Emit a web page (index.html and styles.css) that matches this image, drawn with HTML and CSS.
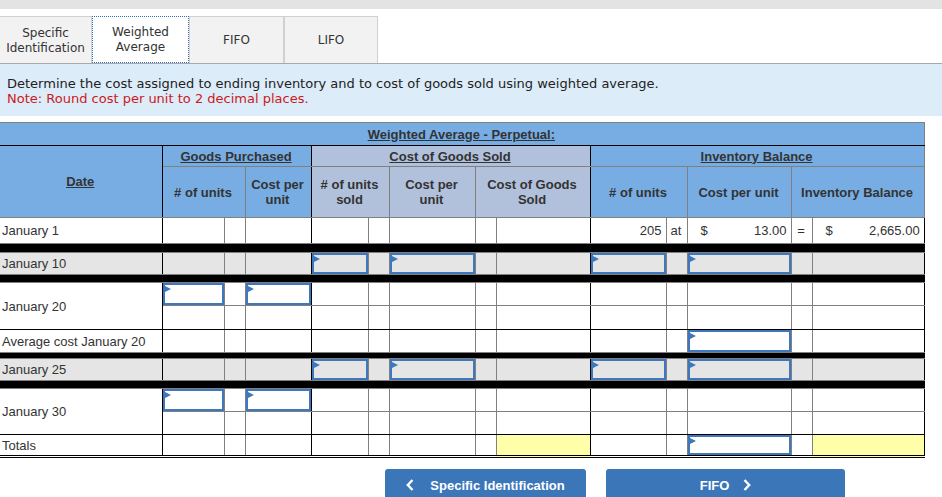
FILE: index.html
```html
<!DOCTYPE html>
<html>
<head>
<meta charset="utf-8">
<link rel="stylesheet" href="styles.css">
</head>
<body>
<div class="topbar"></div>
<div class="tabs">
  <div class="tab t1">Specific<br>Identification</div>
  <div class="tab t2 active">Weighted<br>Average</div>
  <div class="tab t3">FIFO</div>
  <div class="tab t4">LIFO</div>
</div>
<div class="instr">
  <p>Determine the cost assigned to ending inventory and to cost of goods sold using weighted average.</p>
  <p class="note">Note: Round cost per unit to 2 decimal places.</p>
</div>
<table class="grid">
  <colgroup>
    <col style="width:162px"><col style="width:62px"><col style="width:21px"><col style="width:66px">
    <col style="width:57px"><col style="width:21px"><col style="width:86px"><col style="width:21px"><col style="width:94px">
    <col style="width:76px"><col style="width:21px"><col style="width:104px"><col style="width:21px"><col style="width:112px">
  </colgroup>
  <thead>
    <tr class="h1"><th colspan="14" class="title"><u>Weighted Average - Perpetual:</u></th></tr>
    <tr class="h2">
      <th rowspan="2" class="k date"><u>Date</u></th>
      <th colspan="3" class="k"><u>Goods Purchased</u></th>
      <th colspan="5" class="k cogs"><u>Cost of Goods Sold</u></th>
      <th colspan="5" class="edge"><u>Inventory Balance</u></th>
    </tr>
    <tr class="h3">
      <th colspan="2"># of units</th>
      <th class="k">Cost per<br>unit</th>
      <th colspan="2" class="cogs"># of units<br>sold</th>
      <th class="cogs">Cost per<br>unit</th>
      <th colspan="2" class="cogs k">Cost of Goods<br>Sold</th>
      <th colspan="2"># of units</th>
      <th>Cost per unit</th>
      <th colspan="2" class="edge">Inventory Balance</th>
    </tr>
  </thead>
  <tbody>
    <tr class="r26">
      <td class="lbl k">January 1</td>
      <td></td><td></td><td class="k"></td>
      <td></td><td></td><td></td><td></td><td class="k"></td>
      <td class="num">205</td><td class="ctr">at</td>
      <td><div class="amt"><span>$</span><span>13.00</span></div></td>
      <td class="ctr">=</td>
      <td class="k"><div class="amt"><span>$</span><span>2,665.00</span></div></td>
    </tr>
    <tr class="sep s9"><td colspan="14"></td></tr>
    <tr class="r22 gray">
      <td class="lbl k">January 10</td>
      <td></td><td></td><td class="k"></td>
      <td class="in"><div class="inp"></div></td><td></td><td class="in"><div class="inp"></div></td><td></td><td class="k"></td>
      <td class="in"><div class="inp"></div></td><td></td><td class="in"><div class="inp"></div></td><td></td><td class="k"></td>
    </tr>
    <tr class="sep s8"><td colspan="14"></td></tr>
    <tr class="r23">
      <td class="lbl k kb" rowspan="2">January 20</td>
      <td class="in"><div class="inp"></div></td><td></td><td class="in k"><div class="inp"></div></td>
      <td></td><td></td><td></td><td></td><td class="k"></td>
      <td></td><td></td><td></td><td></td><td class="k"></td>
    </tr>
    <tr class="r24 kb">
      <td></td><td></td><td class="k"></td>
      <td></td><td></td><td></td><td></td><td class="k"></td>
      <td></td><td></td><td></td><td></td><td class="k"></td>
    </tr>
    <tr class="r23">
      <td class="lbl k">Average cost January 20</td>
      <td></td><td></td><td class="k"></td>
      <td></td><td></td><td></td><td></td><td class="k"></td>
      <td></td><td></td><td class="in"><div class="inp"></div></td><td></td><td class="k"></td>
    </tr>
    <tr class="sep s6"><td colspan="14"></td></tr>
    <tr class="r22 gray">
      <td class="lbl k">January 25</td>
      <td></td><td></td><td class="k"></td>
      <td class="in"><div class="inp"></div></td><td></td><td class="in"><div class="inp"></div></td><td></td><td class="k"></td>
      <td class="in"><div class="inp"></div></td><td></td><td class="in"><div class="inp"></div></td><td></td><td class="k"></td>
    </tr>
    <tr class="sep s8"><td colspan="14"></td></tr>
    <tr class="r23">
      <td class="lbl k kb" rowspan="2">January 30</td>
      <td class="in"><div class="inp"></div></td><td></td><td class="in k"><div class="inp"></div></td>
      <td></td><td></td><td></td><td></td><td class="k"></td>
      <td></td><td></td><td></td><td></td><td class="k"></td>
    </tr>
    <tr class="r23 kb">
      <td></td><td></td><td class="k"></td>
      <td></td><td></td><td></td><td></td><td class="k"></td>
      <td></td><td></td><td></td><td></td><td class="k"></td>
    </tr>
    <tr class="r21 totals">
      <td class="lbl k">Totals</td>
      <td></td><td></td><td class="k"></td>
      <td></td><td></td><td></td><td></td><td class="k yellow"></td>
      <td></td><td></td><td class="in"><div class="inp"></div></td><td></td><td class="k yellow"></td>
    </tr>
  </tbody>
</table>
<div class="nav">
  <div class="btn prev">
    <svg width="8" height="12" viewBox="0 0 8 12"><polyline points="6.5,1 1.8,6 6.5,11" fill="none" stroke="#fff" stroke-width="2.4"/></svg>
    <span>Specific Identification</span>
  </div>
  <div class="btn next">
    <span>FIFO</span>
    <svg width="8" height="12" viewBox="0 0 8 12"><polyline points="1.5,1 6.2,6 1.5,11" fill="none" stroke="#fff" stroke-width="2.4"/></svg>
  </div>
</div>
</body>
</html>
```

FILE: styles.css
```css
* { box-sizing: border-box; }
html, body { margin: 0; padding: 0; background: #fff; }
body {
  width: 942px;
  height: 497px;
  overflow: hidden;
  font-family: "Liberation Sans", Arial, sans-serif;
  color: #333;
}

.topbar { height: 9px; background: #e3e3e3; }

.tabs {
  display: flex;
  margin-top: 7px;
  height: 48px;
  border-bottom: 1px solid #a9a9a9;
}
.tab {
  display: flex;
  align-items: center;
  justify-content: center;
  text-align: center;
  background: #f2f2f2;
  border: 1px solid #d0d0d0;
  border-bottom: none;
  font-family: "DejaVu Sans", Verdana, sans-serif;
  font-size: 12px;
  line-height: 15px;
  color: #333;
  padding-top: 1px;
}
.t1 { width: 92px; border-left: none; }
.t2 { width: 97px; }
.t3 { width: 95px; }
.t4 { width: 94px; }
.tab.active {
  background: #fff;
  border: 1px dotted #2d6cc0;
}

.instr {
  background: #dcecf9;
  height: 52px;
  padding: 12px 7px 0;
  font-family: "DejaVu Sans", Verdana, sans-serif;
  font-size: 13px;
  line-height: 15px;
  color: #222;
}
.instr p { margin: 0; }
.instr .note { color: #cc1a1a; }

.grid {
  margin-top: 6px;
  border-collapse: collapse;
  table-layout: fixed;
  width: 924px;
  font-size: 13px;
}
.grid th, .grid td {
  border: 1px solid #808080;
  padding: 0 4px 0 3px;
  color: #333;
}
.grid th {
  background: #78ade4;
  font-weight: bold;
  line-height: 15px;
  text-align: center;
  vertical-align: middle;
}
.grid th.cogs { background: #b1c1dc; }
.grid th.title { border-bottom-color: #000; border-left: none; }
.grid th.date { border-left: none; }
.grid .k { border-right-color: #000; }
.grid th.k { border-right-color: #000; }
.h1 { height: 23px; }
.h2 { height: 21px; }
.h3 { height: 51px; }

.r21 { height: 21px; }
.r22 { height: 22px; }
.r23 { height: 23px; }
.r24 { height: 24px; }
.r26 { height: 26px; }

.grid td.lbl { border-left: none; padding-left: 2px; white-space: nowrap; }
.grid tr.kb td, .grid td.kb { border-bottom-color: #000; }
.gray td { background: #e5e5e5; }
.grid td.yellow { background: #ffffa9; }
.totals td { border-bottom: 3px double #000; }
.num { text-align: right; }
.ctr { text-align: center; }
.amt {
  display: flex;
  justify-content: space-between;
  padding-left: 10px;
}

.sep td {
  background: #000;
  padding: 0;
  border-left: none;
  border-right-color: #000;
  font-size: 0;
  line-height: 0;
}
.s9 { height: 9px; }
.s8 { height: 8px; }
.s6 { height: 6px; }

.grid td.in { padding: 0; vertical-align: top; }
.inp {
  position: relative;
  width: 100%;
  height: 21px;
  border: 2px solid #3e77bd;
}
.r23 .inp { height: 22px; }
.r21 .inp { height: 20px; }
.inp::before {
  content: "";
  position: absolute;
  left: 0;
  top: 1px;
  border-left: 6px solid #3e77bd;
  border-top: 3px solid transparent;
  border-bottom: 3px solid transparent;
}

.nav {
  display: flex;
  gap: 20px;
  padding-left: 385px;
  margin-top: 11px;
}
.btn {
  height: 32px;
  background: #3b76b9;
  color: #fff;
  font-weight: bold;
  font-size: 13px;
  display: flex;
  align-items: center;
  justify-content: center;
  gap: 16px;
  border-radius: 3px 3px 0 0;
}
.btn svg { display: block; }
.btn.prev { width: 201px; }
.btn.next { width: 239px; gap: 14px; }
```
